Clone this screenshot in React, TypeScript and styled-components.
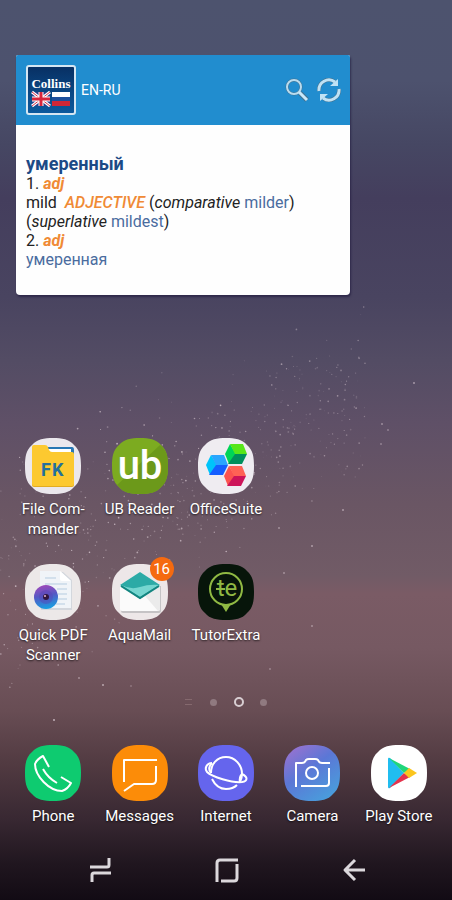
import React from "react";
import styled, { createGlobalStyle, css } from "styled-components";

const GlobalStyle = createGlobalStyle`
  * { box-sizing: border-box; }
  body { margin: 0; font-family: Roboto, "Noto Sans", sans-serif; }
  button { font: inherit; color: inherit; background: none; border: 0; padding: 0; cursor: pointer; }
`;

const Screen = styled.main`
  position: relative;
  isolation: isolate;
  min-height: 100vh;
  display: flex;
  flex-direction: column;
  overflow: hidden;
  color: #fff;
  background: linear-gradient(
    #4d536e 0%, #4d526e 9%, #464763 16%, #443e5d 22%, #494460 33%, #534c64 40%,
    #5f5067 47%, #6a5664 56%, #715b66 64%, #7a5b65 66%, #765962 72%, #684d54 79%,
    #513a41 85%, #382832 91%, #20161f 96%, #120b14 100%
  );
`;

const Sky = styled.svg`
  position: absolute;
  inset: 0;
  width: 100%;
  height: 100%;
  z-index: -1;
  fill: #d9cad2;
`;

const Widget = styled.section`
  width: calc(100% - 118px);
  margin: 55px 16px 32px;
  border-radius: 2px 2px 4px 4px;
  background: #fefefe;
  box-shadow: 1px 2px 2px rgba(30, 24, 60, 0.6);
  overflow: hidden;
`;

const WidgetHeader = styled.header`
  display: flex;
  align-items: center;
  gap: 5px;
  height: 70px;
  padding: 0 9px 0 10px;
  background: #218dcf;
  font-size: 14px;
`;

const Logo = styled.svg`
  width: 50px;
  height: 50px;
  flex: none;
`;

const Tools = styled.div`
  display: flex;
  gap: 8px;
  margin-left: auto;
`;

const ToolButton = styled.button`
  width: 24px;
  height: 24px;
  svg { display: block; }
`;

const Entry = styled.div`
  padding: 29px 10px 26px;
  color: #222;
  font-size: 16px;
  line-height: 19px;
  p { margin: 0; }
`;

const Headword = styled.h1`
  margin: 0;
  color: #1c4a86;
  font-size: 18px;
  line-height: 20px;
  font-weight: 700;
`;

const Part = styled.em<{ $strong?: boolean }>`
  color: #f08a35;
  font-weight: ${(p) => (p.$strong ? 700 : 500)};
`;

const WordLink = styled.a`
  color: #4a6c9e;
  text-decoration: none;
`;

const iconRow = css`
  display: grid;
  grid-template-columns: repeat(5, 1fr);
  padding: 0 10px;
`;

const AppGrid = styled.section`
  ${iconRow}
  margin-top: auto;
  row-gap: 25px;
`;

const Dock = styled.section`
  ${iconRow}
`;

const Launcher = styled.button<{ $column?: number }>`
  display: flex;
  flex-direction: column;
  align-items: center;
  gap: 5px;
  grid-column: ${(p) => p.$column ?? "auto"};
`;

const IconFrame = styled.span`
  position: relative;
  width: 56px;
  height: 56px;
  svg { display: block; width: 56px; height: 56px; }
`;

const Badge = styled.span`
  position: absolute;
  top: -7px;
  right: -6px;
  width: 24px;
  height: 24px;
  border-radius: 50%;
  background: #f56a10;
  font-size: 15px;
  line-height: 24px;
  text-align: center;
`;

const Label = styled.span`
  font-size: 15px;
  line-height: 20px;
  text-align: center;
  text-shadow: 0 1px 2px rgba(0, 0, 0, 0.7);
`;

const Pager = styled.nav`
  display: flex;
  justify-content: center;
  align-items: center;
  gap: 11px;
  height: 14px;
  margin: 30px 0 36px;
`;

const PageButton = styled.button`
  display: grid;
  place-items: center;
  width: 14px;
  height: 14px;
`;

const Dot = styled.span<{ $active?: boolean }>`
  width: ${(p) => (p.$active ? 10 : 7)}px;
  height: ${(p) => (p.$active ? 10 : 7)}px;
  border-radius: 50%;
  border: ${(p) => (p.$active ? "2px solid #d8ced2" : "0")};
  background: ${(p) => (p.$active ? "transparent" : "#907a80")};
`;

const FeedMark = styled.span`
  width: 7px;
  height: 6px;
  border: solid #85696e;
  border-width: 1px 0;
`;

const SystemBar = styled.nav`
  display: grid;
  grid-template-columns: repeat(3, 1fr);
  justify-items: center;
  align-items: center;
  height: 60px;
  margin-top: 14px;
  padding: 0 36px;
`;

const SystemButton = styled.button`
  width: 28px;
  height: 28px;
  svg { display: block; }
`;

function buildStars() {
  let seed = 71;
  const rnd = () => {
    seed = (seed * 16807) % 2147483647;
    return seed / 2147483647;
  };
  const stars: { x: number; y: number; r: number; o: number }[] = [];
  for (let i = 0; i < 620; i++) {
    const x = rnd() * 370 - 5;
    const spread = (rnd() + rnd() + rnd() - 1.5) * (x > 180 ? 75 : 100);
    stars.push({
      x,
      y: 590 - x * 0.55 + spread,
      r: 0.4 + rnd() * 0.5,
      o: (0.15 + rnd() * 0.65) * (x > 230 ? 0.7 : 1),
    });
  }
  return stars;
}
const stars = [
  ...buildStars(),
  { x: 414, y: 383, r: 1, o: 0.6 }, { x: 382, y: 424, r: 1, o: 0.5 },
  { x: 388, y: 430, r: 1, o: 0.4 }, { x: 381, y: 444, r: 1, o: 0.4 },
  { x: 343, y: 510, r: 1, o: 0.6 }, { x: 312, y: 546, r: 1, o: 0.6 },
  { x: 279, y: 528, r: 1, o: 0.5 }, { x: 284, y: 573, r: 1, o: 0.5 },
  { x: 312, y: 626, r: 1, o: 0.5 }, { x: 54, y: 720, r: 1, o: 0.8 },
  { x: 103, y: 685, r: 1, o: 0.7 }, { x: 79, y: 678, r: 1, o: 0.5 },
  { x: 270, y: 669, r: 1, o: 0.4 }, { x: 131, y: 686, r: 1, o: 0.3 },
];

const Tile = ({ fill }: { fill: string }) => (
  <path fill={fill} d="M28 0C37 0 44 1 49 7C55 12 56 19 56 28S55 44 49 49C44 55 37 56 28 56S12 55 7 49C1 44 0 37 0 28S1 12 7 7C12 1 19 0 28 0Z" />
);

const Line = styled.g<{ $soft?: boolean }>`
  fill: none;
  stroke: ${(p) => (p.$soft ? "#dcd8dc" : "#fff")};
  stroke-width: ${(p) => (p.$soft ? 3 : 2)}px;
  stroke-linejoin: round;
`;

const Svg = ({ children }: { children: React.ReactNode }) => (
  <svg viewBox="0 0 56 56" aria-hidden="true">{children}</svg>
);

const FilesIcon = () => (
  <Svg>
    <Tile fill="#ebe8ed" />
    <path fill="#2877b4" d="M22 9h25q2 0 2 3v7H22Z" />
    <path fill="#fff" d="M22 11h24v7H22Z" />
    <path fill="#e2ac22" d="M7 40h42v7q0 2-2 2H9q-2 0-2-2Z" />
    <path fill="#fcc930" d="M9 7h11q2 0 3 2l1 3q1 2 3 2h20q2 0 2 2v30q0 2-2 2H9q-2 0-2-2V9q0-2 2-2Z" />
    <text x="16" y="38" fill="#23709c" fontSize="18" fontWeight="700" fontFamily="Roboto">F</text>
    <text x="27" y="38" fill="#23709c" fontSize="18" fontWeight="700" fontFamily="Roboto">K</text>
  </Svg>
);

const ReaderIcon = () => (
  <Svg>
    <Tile fill="#7cab20" />
    <path fill="#6c991a" d="M5 47 48 7C55 12 56 19 56 28S55 44 49 49C44 55 37 56 28 56S12 55 7 49Z" />
    <text x="28" y="41" textAnchor="middle" fill="#fff" fontSize="40" fontWeight="500" fontFamily="Roboto">ub</text>
  </Svg>
);

const Cube = ({ x, y, left, top, base }: { x: number; y: number; left: string; top: string; base: string }) => (
  <g transform={`translate(${x} ${y})`}>
    <path fill={left} d="M-11 0-6-10 0 0-7 10Z" />
    <path fill={top} d="M-6-10H7L11 0H-1Z" />
    <path fill={base} d="M-1 0H11L6 10H-8Z" />
  </g>
);

const OfficeIcon = () => (
  <Svg>
    <Tile fill="#efecf1" />
    <Cube x={38} y={16} left="#00d457" top="#57e619" base="#008f5c" />
    <Cube x={19} y={27} left="#00c3fa" top="#2aa5ff" base="#155eff" />
    <Cube x={37} y={38} left="#fb5350" top="#ff6255" base="#cd1459" />
  </Svg>
);

const ScannerIcon = () => (
  <Svg>
    <defs>
      <linearGradient id="lens" x1="0.3" y1="0" x2="0.5" y2="1">
        <stop offset="0" stopColor="#a14abb" />
        <stop offset="0.45" stopColor="#5658c4" />
        <stop offset="1" stopColor="#17a0e2" />
      </linearGradient>
    </defs>
    <Tile fill="#ece8e8" />
    <path fill="#d3d7dd" d="M16 8h22l9 8v30H16Z" />
    <path fill="#f0f4f8" d="M15 7h20l11 10v27H15Z" />
    <path fill="#fff" d="M35 7l11 10H37q-2 0-2-2Z" />
    <path stroke="#b5cce0" d="M20 14h11M20 20h22M32 25h10M33 30h9M33 35h9M31 40h9" />
    <circle cx="21" cy="33" r="12" fill="url(#lens)" />
    <circle cx="21" cy="33" r="7" fill="#5a3fb4" opacity="0.4" />
    <circle cx="21" cy="33" r="3" fill="#33163f" />
    <circle cx="20" cy="32" r="1" fill="#e7b9d2" />
  </Svg>
);

const MailIcon = () => (
  <Svg>
    <Tile fill="#ede7e8" />
    <path fill="#c5c3c5" d="M9 22h40v25q0 2-2 2H11q-2 0-2-2Z" />
    <path fill="#fbfbfb" d="M8 21 28 8l20 13v24q0 2-2 2H10q-2 0-2-2Z" />
    <path fill="#ebebeb" d="M33 32 48 21v24q0 2-2 2Z" />
    <path fill="#2caaa6" d="M28 8 48 21 28 35 8 21Z" />
    <path fill="#75d6d0" d="M9 21q10 5 19 2t19-2L28 33Z" />
    <path fill="none" stroke="#138580" strokeWidth="2" d="M9 22 28 34 47 22" />
  </Svg>
);

const TutorIcon = () => (
  <Svg>
    <Tile fill="#07150a" />
    <circle cx="28" cy="25" r="16" fill="none" stroke="#90b943" strokeWidth="2" />
    <path fill="#90b943" d="M23 40q5 2 10 0l-5 8Z" />
    <path stroke="#90b943" strokeWidth="2" d="M18 25h9" />
    <text x="29" y="32" textAnchor="middle" fill="#90b943" fontSize="24" fontFamily="Roboto">te</text>
  </Svg>
);

const PhoneIcon = () => (
  <Svg>
    <Tile fill="#0ecb70" />
    <Line>
      <path d="M24 22 18 11Q12 14 10 19C10 31 24 46 37 46Q43 44 46 38L36 32" />
      <path d="M18 24Q23 33 32 38" />
    </Line>
  </Svg>
);

const MessagesIcon = () => (
  <Svg>
    <Tile fill="#fc8c08" />
    <Line>
      <path d="M45 15H12V37M44 21V35Q44 39 40 39H22L12 46" />
    </Line>
  </Svg>
);

const InternetIcon = () => (
  <Svg>
    <Tile fill="#6565ed" />
    <Line>
      <path d="M13 28C13 19 19 12 28 12S44 20 44 29Q44 33 42 37" />
      <path d="M14 18C9 18 6 23 9 27C14 32 34 38 44 37C50 36 50 32 44 29" />
      <path d="M14 18Q9 23 13 28M44 29Q41 32 42 37" />
      <path d="M14 34Q19 44 28 44Q35 44 39 40" />
    </Line>
  </Svg>
);

const CameraIcon = () => (
  <Svg>
    <defs>
      <linearGradient id="camera" x1="0.1" y1="0" x2="0.8" y2="1">
        <stop offset="0" stopColor="#9d72d0" />
        <stop offset="0.45" stopColor="#5b77d6" />
        <stop offset="1" stopColor="#48a0dc" />
      </linearGradient>
    </defs>
    <Tile fill="url(#camera)" />
    <Line>
      <path d="M12 42V18H18Q21 18 22 15Q23 14 25 14H31Q33 14 34 15Q35 18 38 18H46" />
      <path d="M45 23V38Q45 41 42 41H17" />
      <circle cx="28" cy="28" r="6" />
    </Line>
  </Svg>
);

const PlayIcon = () => (
  <Svg>
    <Tile fill="#fff" />
    <path fill="#20bdf0" d="M17 14V42Q17 44 19 43L33 28 19 13Q17 12 17 14Z" />
    <path fill="#20d67a" d="M18 13 39 24 33 28Z" />
    <path fill="#e4334d" d="M18 43 39 32 33 28Z" />
    <path fill="#fbc51d" d="M38 23 46 28 38 33 33 28Z" />
  </Svg>
);

type App = { name: string; icon: React.ReactNode; badge?: number; column?: number };

const apps: App[] = [
  { name: "File Com\u00admander", icon: <FilesIcon />, column: 1 },
  { name: "UB Reader", icon: <ReaderIcon />, column: 2 },
  { name: "OfficeSuite", icon: <OfficeIcon />, column: 3 },
  { name: "Quick PDF Scanner", icon: <ScannerIcon />, column: 1 },
  { name: "AquaMail", icon: <MailIcon />, badge: 16, column: 2 },
  { name: "TutorExtra", icon: <TutorIcon />, column: 3 },
];

const dockApps: App[] = [
  { name: "Phone", icon: <PhoneIcon /> },
  { name: "Messages", icon: <MessagesIcon /> },
  { name: "Internet", icon: <InternetIcon /> },
  { name: "Camera", icon: <CameraIcon /> },
  { name: "Play Store", icon: <PlayIcon /> },
];

const AppLauncher = ({ app }: { app: App }) => (
  <Launcher type="button" $column={app.column}>
    <IconFrame>
      {app.icon}
      {app.badge && <Badge>{app.badge}</Badge>}
    </IconFrame>
    <Label>{app.name}</Label>
  </Launcher>
);

const CollinsLogo = () => (
  <Logo viewBox="0 0 50 50" aria-hidden="true">
    <defs>
      <linearGradient id="navy" x1="0" y1="0" x2="0" y2="1">
        <stop offset="0" stopColor="#082f62" />
        <stop offset="1" stopColor="#0b5a9e" />
      </linearGradient>
    </defs>
    <rect x="1" y="1" width="48" height="48" rx="2" fill="url(#navy)" stroke="#d5e6f2" strokeWidth="2" />
    <text x="25" y="23" textAnchor="middle" fill="#fff" fontSize="13" fontWeight="700" fontFamily="Liberation Serif">Collins</text>
    <rect x="6" y="27" width="18" height="14" fill="#2b3f8c" />
    <path stroke="#fff" strokeWidth="3" d="M6 27 24 41M24 27 6 41" />
    <path stroke="#d8304a" d="M6 27 24 41M24 27 6 41" />
    <path stroke="#fff" strokeWidth="5" d="M15 27V41M6 34H24" />
    <path stroke="#d8263c" strokeWidth="3" d="M15 27V41M6 34H24" />
    <path fill="#fff" d="M26 27H44V32H26Z" />
    <path fill="#1c509c" d="M26 32H44V36H26Z" />
    <path fill="#cf2736" d="M26 36H44V41H26Z" />
  </Logo>
);

export default function App() {
  return (
    <>
      <GlobalStyle />
      <Screen>
        <Sky viewBox="0 0 452 900" preserveAspectRatio="xMidYMid slice" aria-hidden="true">
          {stars.map((s, i) => (
            <circle key={i} cx={s.x} cy={s.y} r={s.r} opacity={s.o} />
          ))}
        </Sky>

        <Widget>
          <WidgetHeader>
            <CollinsLogo />
            <span>EN-RU</span>
            <Tools>
              <ToolButton type="button" aria-label="Search">
                <svg width="24" height="24" viewBox="0 0 24 24" fill="none">
                  <circle cx="9" cy="9" r="7" stroke="#43718f" strokeWidth="3" />
                  <path stroke="#43718f" strokeWidth="5" d="m15 15 7 7" />
                  <circle cx="9" cy="9" r="7" stroke="#b8dcf0" strokeWidth="2" />
                  <path stroke="#c8e8fa" strokeWidth="3" d="m14 14 8 8" />
                </svg>
              </ToolButton>
              <ToolButton type="button" aria-label="Refresh">
                <svg width="24" height="24" viewBox="0 0 24 24" fill="none">
                  <g stroke="#43718f" strokeWidth="4">
                    <path d="M2 13A10 10 0 0 1 18 4M22 11A10 10 0 0 1 6 20" />
                  </g>
                  <g stroke="#bfe2f5" strokeWidth="3">
                    <path d="M2 13A10 10 0 0 1 18 4M22 11A10 10 0 0 1 6 20" />
                  </g>
                  <path fill="#bfe2f5" d="M21 1v7h-8ZM3 23v-7h8Z" />
                </svg>
              </ToolButton>
            </Tools>
          </WidgetHeader>
          <Entry>
            <Headword>умеренный</Headword>
            <p>1. <Part $strong>adj</Part></p>
            <p>
              mild&nbsp; <Part>ADJECTIVE</Part> (<em>comparative</em> <WordLink href="#milder">milder</WordLink>)
              {" "}(<em>superlative</em> <WordLink href="#mildest">mildest</WordLink>)
            </p>
            <p>2. <Part $strong>adj</Part></p>
            <p><WordLink href="#umerennaya">умеренная</WordLink></p>
          </Entry>
        </Widget>

        <AppGrid aria-label="Apps">
          {apps.map((app) => <AppLauncher key={app.name} app={app} />)}
        </AppGrid>

        <Pager aria-label="Home pages">
          <PageButton type="button" aria-label="Feed"><FeedMark /></PageButton>
          <PageButton type="button" aria-label="Page 1"><Dot /></PageButton>
          <PageButton type="button" aria-label="Page 2" aria-current="page"><Dot $active /></PageButton>
          <PageButton type="button" aria-label="Page 3"><Dot /></PageButton>
        </Pager>

        <Dock aria-label="Dock">
          {dockApps.map((app) => <AppLauncher key={app.name} app={app} />)}
        </Dock>

        <SystemBar aria-label="System">
          <SystemButton type="button" aria-label="Recent apps">
            <svg width="28" height="28" viewBox="0 0 28 28">
              <Line $soft><path d="M5 11H22Q24 11 24 9V2M26 17H9Q7 17 7 19V26" /></Line>
            </svg>
          </SystemButton>
          <SystemButton type="button" aria-label="Home">
            <svg width="28" height="28" viewBox="0 0 28 28">
              <Line $soft><path d="M26 4H8Q5 4 5 7V26M25 8V22Q25 25 22 25H9" /></Line>
            </svg>
          </SystemButton>
          <SystemButton type="button" aria-label="Back">
            <svg width="28" height="28" viewBox="0 0 28 28">
              <Line $soft><path d="M26 14H6M16 4 6 14 16 24" /></Line>
            </svg>
          </SystemButton>
        </SystemBar>
      </Screen>
    </>
  );
}
